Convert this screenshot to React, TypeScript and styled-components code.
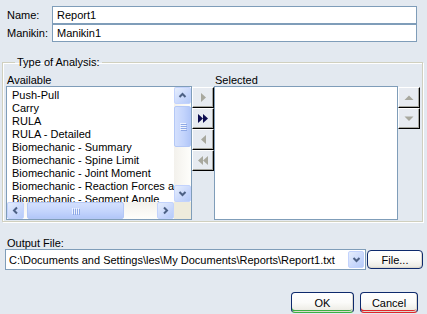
import React from "react";
import styled, { createGlobalStyle } from "styled-components";

const GlobalStyle = createGlobalStyle`
  html, body {
    margin: 0;
    padding: 0;
    background: #e3e9f0;
  }
  body {
    font-family: "Liberation Sans", Arial, sans-serif;
    font-size: 11px;
    color: #000;
  }
`;

const Dialog = styled.div`
  width: 427px;
  height: 314px;
  box-sizing: border-box;
  padding: 6px 4px 0 2px;
  display: flex;
  flex-direction: column;
  overflow: hidden;
`;

const FieldRow = styled.div`
  display: flex;
  align-items: center;
  height: 18px;
  padding: 0 6px 0 5px;
`;

const FieldLabel = styled.label`
  width: 45px;
  flex: none;
  line-height: 13px;
`;

const TextInput = styled.input`
  flex: 1;
  height: 100%;
  box-sizing: border-box;
  border: 1px solid #7f9db9;
  background: #fff;
  padding: 0 4px;
  font: inherit;
  color: #000;
  outline: none;
`;

const Group = styled.fieldset`
  margin: 14px 0 0 0;
  padding: 5px 2px 1px 3px;
  border: 1px solid #d0d0bf;
  box-shadow: inset 1px 1px 0 #fff, 1px 1px 0 #fff;
  min-width: 0;
`;

const Legend = styled.legend`
  margin-left: 9px;
  padding: 0 2px;
  line-height: 13px;
`;

const Columns = styled.div`
  display: flex;
  align-items: flex-start;
`;

const ListColumn = styled.div<{ $width: number }>`
  width: ${(p) => p.$width}px;
  flex: none;
  display: flex;
  flex-direction: column;
`;

const Caption = styled.div`
  height: 12px;
  line-height: 12px;
  padding-left: 1px;
`;

const ListBox = styled.div<{ $scroll?: boolean }>`
  height: 134px;
  box-sizing: border-box;
  border: 1px solid #7f9db9;
  background: #fff;
  display: grid;
  grid-template-columns: ${(p) => (p.$scroll ? "1fr 17px" : "1fr")};
  grid-template-rows: ${(p) => (p.$scroll ? "1fr 17px" : "1fr")};
  overflow: hidden;
`;

const Items = styled.ul`
  list-style: none;
  margin: 0;
  padding: 2px 0 0 5px;
  overflow: hidden;
  white-space: nowrap;
`;

const Item = styled.li`
  line-height: 13px;
  height: 13px;
`;

const VTrack = styled.div`
  display: flex;
  flex-direction: column;
  background: linear-gradient(90deg, #f3f1ec, #fefefb);
`;

const HTrack = styled.div`
  display: flex;
  align-items: stretch;
  background: linear-gradient(180deg, #f3f1ec, #fefefb);
`;

const TrackSpace = styled.div<{ $vertical?: boolean }>`
  flex: 1;
  display: flex;
  flex-direction: ${(p) => (p.$vertical ? "column" : "row")};
`;

const ArrowButton = styled.div`
  width: 17px;
  height: 17px;
  flex: none;
  box-sizing: border-box;
  border: 1px solid #c3d3fd;
  border-radius: 2px;
  background: linear-gradient(135deg, #e6eefc 0%, #c9d8fc 60%, #b6cbf9 100%);
  display: flex;
  align-items: center;
  justify-content: center;
`;

const Thumb = styled.div<{ $vertical?: boolean; $offset: number; $size: number }>`
  box-sizing: border-box;
  border: 1px solid #b4c8f6;
  border-radius: 2px;
  background: ${(p) =>
    p.$vertical
      ? "linear-gradient(90deg, #d4e0fd, #c2d3fc 60%, #b2c7f8)"
      : "linear-gradient(180deg, #d4e0fd, #c2d3fc 60%, #b2c7f8)"};
  ${(p) =>
    p.$vertical
      ? `margin-top: ${p.$offset}px; height: ${p.$size}px; width: 100%;`
      : `margin-left: ${p.$offset}px; width: ${p.$size}px; height: 100%;`}
  display: flex;
  align-items: center;
  justify-content: center;
`;

const Corner = styled.div`
  background: #eeebdc;
`;

const ButtonStack = styled.div`
  width: 22px;
  flex: none;
  margin-top: 13px;
  display: flex;
  flex-direction: column;
`;

const SideButton = styled.button`
  width: 22px;
  height: 21px;
  box-sizing: border-box;
  padding: 0;
  margin: 0;
  border-style: solid;
  border-width: 1px;
  border-color: #fff #000 #000 #fff;
  box-shadow: inset -1px -1px 0 #a7a7a0;
  background: #e7ebf1;
  display: flex;
  align-items: center;
  justify-content: center;
`;

const OutputLabel = styled.div`
  margin-top: 15px;
  padding-left: 5px;
  line-height: 12px;
  height: 12px;
`;

const OutputRow = styled.div`
  display: flex;
  align-items: center;
  height: 21px;
  padding-left: 3px;
  gap: 1px;
`;

const Combo = styled.div`
  width: 361px;
  height: 21px;
  box-sizing: border-box;
  border: 1px solid #7f9db9;
  background: #fff;
  display: flex;
  align-items: center;
  padding: 1px;
`;

const ComboText = styled.span`
  flex: 1;
  padding-left: 2px;
  white-space: nowrap;
  overflow: hidden;
`;

const ComboArrow = styled(ArrowButton)`
  width: 16px;
  height: 17px;
`;

const PushButton = styled.button<{ $width: number; $height: number; $accent?: string }>`
  width: ${(p) => p.$width}px;
  height: ${(p) => p.$height}px;
  box-sizing: border-box;
  padding: 0;
  border: 1px solid #0e2a6c;
  border-radius: 4px;
  ${(p) => (p.$accent ? `border-bottom-color: ${p.$accent};` : "")}
  background: linear-gradient(180deg, #ffffff 0%, #fbfbf9 50%, #efeee8 85%, #e3e1d8 100%);
  box-shadow: inset -1px -1px 0 #dcd8cd
    ${(p) => (p.$accent ? `, inset 0 -2px 0 ${p.$accent}` : "")};
  font: inherit;
  color: #000;
  flex: none;
`;

const Footer = styled.div`
  margin-top: 22px;
  display: flex;
  justify-content: flex-end;
  gap: 6px;
  padding-right: 5px;
`;

type Dir = "up" | "down" | "left" | "right";

const Chevron: React.FC<{ dir: Dir }> = ({ dir }) => {
  const paths: Record<Dir, string> = {
    up: "M1.5 6 L4.5 3 L7.5 6",
    down: "M1.5 3 L4.5 6 L7.5 3",
    left: "M6 1.5 L3 4.5 L6 7.5",
    right: "M3 1.5 L6 4.5 L3 7.5",
  };
  return (
    <svg width="9" height="9" viewBox="0 0 9 9">
      <path d={paths[dir]} fill="none" stroke="#4d6185" strokeWidth="2" />
    </svg>
  );
};

// scroll thumb grip: light/dark line pairs
const Grip: React.FC<{ vertical?: boolean }> = ({ vertical }) => (
  <svg width={8} height={8} viewBox="0 0 8 8">
    {[0, 2, 4, 6].map((o) =>
      vertical ? (
        <line key={o} x1="1" x2="7" y1={o + 0.5} y2={o + 0.5} stroke="#eef3fe" strokeWidth="1" />
      ) : (
        <line key={o} y1="1" y2="7" x1={o + 0.5} x2={o + 0.5} stroke="#eef3fe" strokeWidth="1" />
      )
    )}
    {[1, 3, 5, 7].map((o) =>
      vertical ? (
        <line key={"d" + o} x1="2" x2="8" y1={o + 0.5} y2={o + 0.5} stroke="#8fa9e6" strokeWidth="1" />
      ) : (
        <line key={"d" + o} y1="2" y2="8" x1={o + 0.5} x2={o + 0.5} stroke="#8fa9e6" strokeWidth="1" />
      )
    )}
  </svg>
);

const Triangle: React.FC<{ dir: Dir; color: string; double?: boolean }> = ({ dir, color, double }) => {
  if (dir === "up" || dir === "down") {
    const d = dir === "up" ? "M0.5 5 L5 0.5 L9.5 5 Z" : "M0.5 0.5 L5 5 L9.5 0.5 Z";
    return (
      <svg width="10" height="6" viewBox="0 0 10 6">
        <path d={d} fill={color} />
      </svg>
    );
  }
  const one = (x: number) =>
    dir === "right" ? `M${x} 0 L${x + 5} 4.5 L${x} 9 Z` : `M${x + 5} 0 L${x} 4.5 L${x + 5} 9 Z`;
  return (
    <svg width={double ? 10 : 5} height="9" viewBox={`0 0 ${double ? 10 : 5} 9`}>
      <path d={one(0)} fill={color} />
      {double && <path d={one(5)} fill={color} />}
    </svg>
  );
};

const available = [
  "Push-Pull",
  "Carry",
  "RULA",
  "RULA - Detailed",
  "Biomechanic - Summary",
  "Biomechanic - Spine Limit",
  "Biomechanic - Joint Moment",
  "Biomechanic - Reaction Forces and Moments",
  "Biomechanic - Segment Angle",
];

const DISABLED = "#a8a89e";
const ENABLED = "#0b0b4e";

const App: React.FC = () => {
  return (
    <>
      <GlobalStyle />
      <Dialog>
        <FieldRow>
          <FieldLabel>Name:</FieldLabel>
          <TextInput defaultValue="Report1" />
        </FieldRow>
        <FieldRow>
          <FieldLabel>Manikin:</FieldLabel>
          <TextInput defaultValue="Manikin1" />
        </FieldRow>

        <Group>
          <Legend>Type of Analysis:</Legend>
          <Columns>
            <ListColumn $width={186}>
              <Caption>Available</Caption>
              <ListBox $scroll>
                <Items>
                  {available.map((a) => (
                    <Item key={a}>{a}</Item>
                  ))}
                </Items>
                <VTrack>
                  <ArrowButton>
                    <Chevron dir="up" />
                  </ArrowButton>
                  <TrackSpace $vertical>
                    <Thumb $vertical $offset={2} $size={41}>
                      <Grip vertical />
                    </Thumb>
                  </TrackSpace>
                  <ArrowButton>
                    <Chevron dir="down" />
                  </ArrowButton>
                </VTrack>
                <HTrack>
                  <ArrowButton>
                    <Chevron dir="left" />
                  </ArrowButton>
                  <TrackSpace>
                    <Thumb $offset={3} $size={97}>
                      <Grip />
                    </Thumb>
                  </TrackSpace>
                  <ArrowButton>
                    <Chevron dir="right" />
                  </ArrowButton>
                </HTrack>
                <Corner />
              </ListBox>
            </ListColumn>

            <ButtonStack>
              <SideButton>
                <Triangle dir="right" color={DISABLED} />
              </SideButton>
              <SideButton>
                <Triangle dir="right" color={ENABLED} double />
              </SideButton>
              <SideButton>
                <Triangle dir="left" color={DISABLED} />
              </SideButton>
              <SideButton>
                <Triangle dir="left" color={DISABLED} double />
              </SideButton>
            </ButtonStack>

            <ListColumn $width={184}>
              <Caption>Selected</Caption>
              <ListBox />
            </ListColumn>

            <ButtonStack>
              <SideButton>
                <Triangle dir="up" color={DISABLED} />
              </SideButton>
              <SideButton>
                <Triangle dir="down" color={DISABLED} />
              </SideButton>
            </ButtonStack>
          </Columns>
        </Group>

        <OutputLabel>Output File:</OutputLabel>
        <OutputRow>
          <Combo>
            <ComboText>C:\Documents and Settings\les\My Documents\Reports\Report1.txt</ComboText>
            <ComboArrow>
              <Chevron dir="down" />
            </ComboArrow>
          </Combo>
          <PushButton $width={56} $height={19}>
            File...
          </PushButton>
        </OutputRow>

        <Footer>
          <PushButton $width={63} $height={21} $accent="#3cb043">
            OK
          </PushButton>
          <PushButton $width={58} $height={21} $accent="#e0262c">
            Cancel
          </PushButton>
        </Footer>
      </Dialog>
    </>
  );
};

export default App;
